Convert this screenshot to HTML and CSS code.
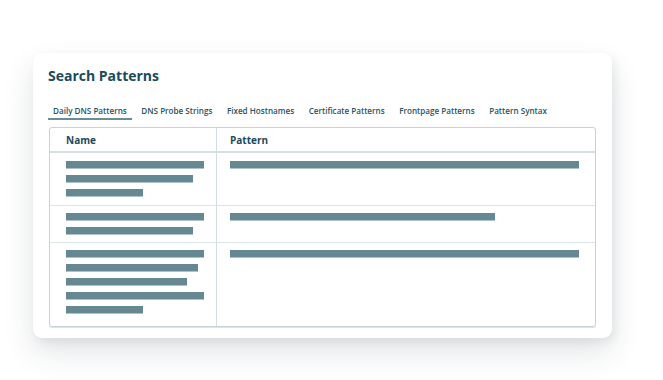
FILE: index.html
```html
<!DOCTYPE html>
<html lang="en">
<head>
  <meta charset="UTF-8">
  <meta name="viewport" content="width=device-width, initial-scale=1.0">
  <title>Search Patterns</title>
  <link rel="stylesheet" href="styles.css">
</head>
<body>
  <div class="page">
    <div class="card">
      <h1>Search Patterns</h1>
      <div class="tabs">
        <span class="tab active">Daily DNS Patterns</span>
        <span class="tab">DNS Probe Strings</span>
        <span class="tab">Fixed Hostnames</span>
        <span class="tab">Certificate Patterns</span>
        <span class="tab">Frontpage Patterns</span>
        <span class="tab">Pattern Syntax</span>
      </div>
      <div class="table">
        <div class="head name">Name</div>
        <div class="head">Pattern</div>

        <!-- row 1 -->
        <div class="cell name">
          <div class="bar" style="width:138px"></div>
          <div class="bar" style="width:127px"></div>
          <div class="bar" style="width:77px"></div>
        </div>
        <div class="cell">
          <div class="bar" style="width:100%"></div>
        </div>

        <!-- row 2 -->
        <div class="cell name tight">
          <div class="bar" style="width:138px"></div>
          <div class="bar" style="width:127px"></div>
        </div>
        <div class="cell tight">
          <div class="bar" style="width:76%"></div>
        </div>

        <!-- row 3 -->
        <div class="cell name last">
          <div class="bar" style="width:138px"></div>
          <div class="bar" style="width:132px"></div>
          <div class="bar" style="width:121px"></div>
          <div class="bar" style="width:138px"></div>
          <div class="bar" style="width:77px"></div>
        </div>
        <div class="cell last">
          <div class="bar" style="width:100%"></div>
        </div>
      </div>
    </div>
  </div>
</body>
</html>
```

FILE: styles.css
```css
body {
  margin: 0;
  background: #fff;
  font-family: "Open Sans", Arial, sans-serif;
  color: #1d4a5a;
}
.page {
  min-height: 380px;
  padding: 53px 0 0 33px;
  box-sizing: border-box;
}
.card {
  width: 579px;
  height: 285px;
  box-sizing: border-box;
  padding: 13px 16px 0 15px;
  background: #fff;
  border-radius: 9px;
  box-shadow: 0 14px 30px rgba(30, 50, 60, 0.13), 3px 4px 8px rgba(30, 50, 60, 0.07);
}
h1 {
  margin: 0 0 16px;
  font-size: 14px;
  font-weight: 700;
  line-height: 20px;
  color: #1d4a5a;
}
.tabs {
  display: flex;
  gap: 4.6px;
  margin-bottom: 7px;
}
.tab {
  padding: 3px 5px 1px;
  font-size: 8.1px;
  font-weight: 600;
  line-height: 12px;
  color: #2a5364;
}
.tab.active {
  border-bottom: 2px solid #6a8c97;
}
.table {
  display: grid;
  grid-template-columns: 167px 1fr;
  margin-left: 1px;
  border: 1px solid #c6d4d7;
  border-radius: 3px;
  box-shadow: 0 1px 0 #dbe4e6;
}
.head {
  height: 23px;
  padding: 0 13px;
  border-bottom: 2px solid #d6e0e2;
  font-size: 10px;
  font-weight: 700;
  line-height: 25px;
}
.head.name {
  padding-left: 16px;
}
.cell {
  display: flex;
  flex-direction: column;
  gap: 6px;
  padding: 8px 16px 8px 13px;
  border-bottom: 1px solid #dbe4e6;
}
.cell.tight {
  padding-top: 7px;
  padding-bottom: 7px;
}
.name {
  padding-left: 16px;
  border-right: 1px solid #d3dee0;
}
.cell.last {
  padding-top: 7px;
  padding-bottom: 12px;
  border-bottom: none;
}
.bar {
  height: 7px;
  background: #668893;
  border-bottom: 1px solid #b0c2c7;
}
```
